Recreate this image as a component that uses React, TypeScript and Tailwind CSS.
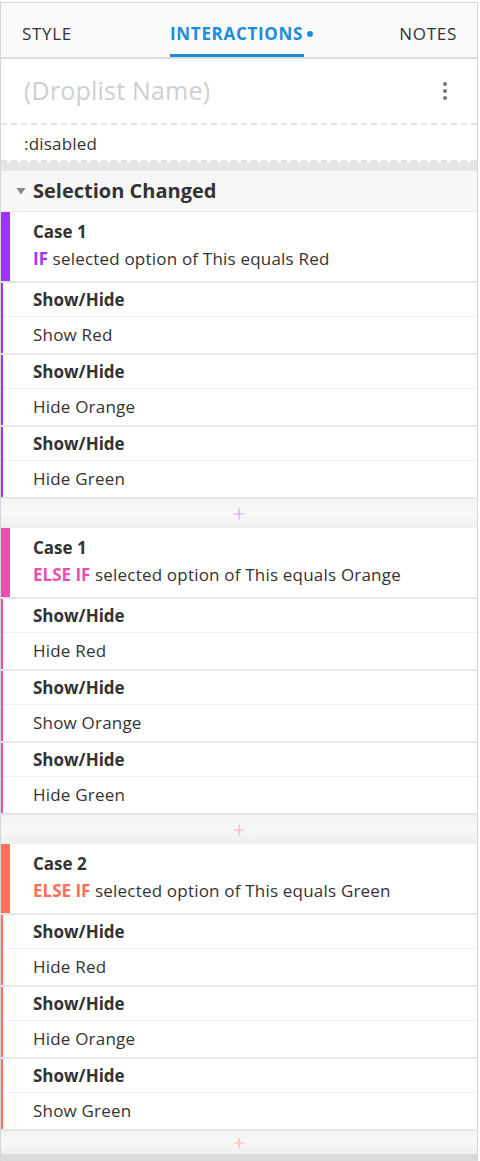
import React from "react";

type Action = { title: string; desc: string };
type Case = {
  name: string;
  kw: string;
  cond: string;
  bar: string;
  kwColor: string;
  plus: string;
  actions: Action[];
};

const cases: Case[] = [
  {
    name: "Case 1",
    kw: "IF",
    cond: "selected option of This equals Red",
    bar: "bg-[#a034f8]",
    kwColor: "text-[#a034f8]",
    plus: "#d8a6fc",
    actions: [
      { title: "Show/Hide", desc: "Show Red" },
      { title: "Show/Hide", desc: "Hide Orange" },
      { title: "Show/Hide", desc: "Hide Green" },
    ],
  },
  {
    name: "Case 1",
    kw: "ELSE IF",
    cond: "selected option of This equals Orange",
    bar: "bg-[#e84fae]",
    kwColor: "text-[#e84fae]",
    plus: "#f3a9d6",
    actions: [
      { title: "Show/Hide", desc: "Hide Red" },
      { title: "Show/Hide", desc: "Show Orange" },
      { title: "Show/Hide", desc: "Hide Green" },
    ],
  },
  {
    name: "Case 2",
    kw: "ELSE IF",
    cond: "selected option of This equals Green",
    bar: "bg-[#ff6f59]",
    kwColor: "text-[#ff6f59]",
    plus: "#ffb2a6",
    actions: [
      { title: "Show/Hide", desc: "Hide Red" },
      { title: "Show/Hide", desc: "Hide Orange" },
      { title: "Show/Hide", desc: "Show Green" },
    ],
  },
];

function Plus({ color }: { color: string }) {
  return (
    <svg width="12" height="12" viewBox="0 0 12 12">
      <path d="M6 0.5V11.5M0.5 6H11.5" stroke={color} strokeWidth="1.2" />
    </svg>
  );
}

function CaseBlock({ c, last }: { c: Case; last: boolean }) {
  return (
    <div className="flex flex-col">
      <div className="flex h-[71px] border-b-2 border-[#e6e6e6] bg-white">
        <div className={`w-[9px] shrink-0 ${c.bar}`} />
        <div className="flex flex-col pl-[23px] pt-[8px]">
          <div className="h-[23px] text-[17px] font-bold leading-[23px] text-[#333]">{c.name}</div>
          <div className="mt-[4px] h-[23px] text-[17px] leading-[23px] tracking-[0.2px] text-[#333]">
            <span className={`font-bold tracking-normal ${c.kwColor}`}>{c.kw}</span> {c.cond}
          </div>
        </div>
      </div>
      {c.actions.map((a, i) => (
        <div key={i} className="flex h-[72px] border-b-2 border-[#e6e6e6] bg-white">
          <div className={`w-[2px] shrink-0 ${c.bar}`} />
          <div className="flex flex-1 flex-col">
            <div className="flex h-[34px] items-center border-b border-[#f1f1f1] pl-[30px] pt-[1px] text-[17px] font-bold text-[#333]">
              {a.title}
            </div>
            <div className="flex h-[35px] items-center pl-[30px] text-[17px] tracking-[0.2px] text-[#333]">
              {a.desc}
            </div>
          </div>
        </div>
      ))}
      <div
        className={`flex ${last ? "h-[23px]" : "h-[29px]"} items-center justify-center bg-gradient-to-b from-[#f3f3f3] via-[#f8f8f8] to-[#efefef]`}
      >
        <Plus color={c.plus} />
      </div>
    </div>
  );
}

export default function App() {
  return (
    <div
      className="h-[1161px] w-[480px] overflow-hidden bg-white pt-[2px]"
      style={{ fontFamily: "'Open Sans', Lato, sans-serif" }}
    >
      <div className="flex h-[1159px] w-[478px] flex-col border-x border-t border-[#d6d6d6]">
        <div className="flex h-[56px] shrink-0 border-b-2 border-[#dcdcdc] bg-[#fafafa] text-[17px] tracking-[0.7px] text-[#333]">
          <div className="flex w-[150px] items-center pl-[21px] pt-[8px]">STYLE</div>
          <div className="relative flex items-center pt-[8px]">
            <div className="ml-[19px] flex items-center font-bold text-[#1a8ddc]">
              INTERACTIONS
              <span className="ml-[4px] inline-block h-[6px] w-[6px] rounded-full bg-[#1a8ddc]" />
            </div>
            <div className="absolute bottom-0 left-[19px] h-[3px] w-[134px] bg-[#1a8ddc]" />
          </div>
          <div className="ml-auto flex items-center pr-[20px] pt-[8px]">NOTES</div>
        </div>
        <div className="flex h-[66px] shrink-0 items-center justify-between border-b-2 border-dashed border-[#e2e2e2] bg-white pl-[23px] pr-[30px]">
          <span className="text-[25px] tracking-[0.2px] text-[#cfcfcf]">(Droplist Name)</span>
          <div className="flex flex-col gap-[3px]">
            <span className="h-[4px] w-[4px] rounded-full bg-[#777]" />
            <span className="h-[4px] w-[4px] rounded-full bg-[#777]" />
            <span className="h-[4px] w-[4px] rounded-full bg-[#777]" />
          </div>
        </div>
        <div className="flex h-[37px] shrink-0 items-center border-b-2 border-dashed border-[#e2e2e2] bg-white pl-[23px] pt-[3px] text-[17px] tracking-[0.2px] text-[#333]">
          :disabled
        </div>
        <div className="h-[9px] shrink-0 bg-[#e6e6e6]" />
        <div className="flex h-[41px] shrink-0 items-center border-b border-[#ececec] bg-[#f7f7f7] pl-[15px]">
          <svg width="10" height="8" viewBox="0 0 10 8" className="mr-[7px]">
            <path d="M0.5 1H9.5L5 7.5Z" fill="#888" />
          </svg>
          <span className="text-[20px] font-bold text-[#333]">Selection Changed</span>
        </div>
        <div className="flex flex-col">
          {cases.map((c, i) => (
            <CaseBlock key={i} c={c} last={i === cases.length - 1} />
          ))}
        </div>
        <div className="flex-1 bg-[#dadada]" />
      </div>
    </div>
  );
}
